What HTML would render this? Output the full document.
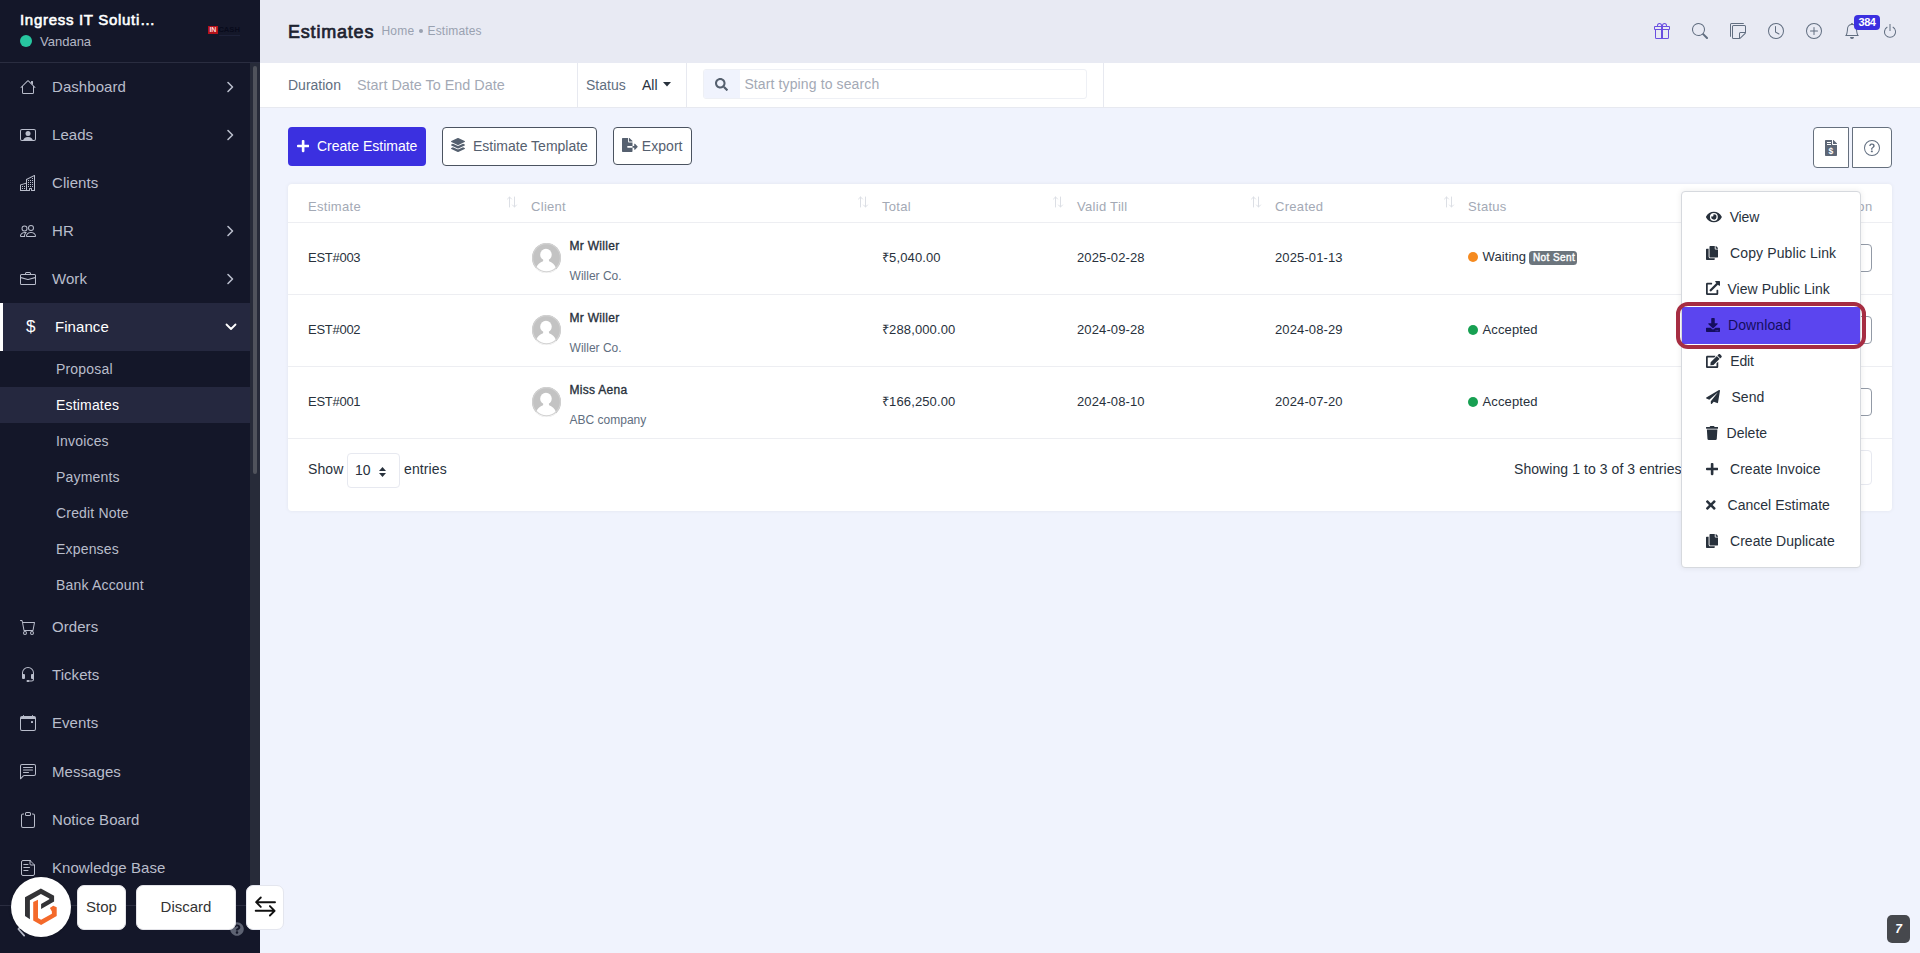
<!DOCTYPE html>
<html lang="en">
<head>
<meta charset="utf-8">
<title>Estimates</title>
<style>
*{box-sizing:border-box;margin:0;padding:0}
html,body{width:1920px;height:953px;overflow:hidden}
body{font-family:"Liberation Sans",sans-serif;font-size:14px;color:#28313c;background:#f0f3fd;position:relative}
.abs{position:absolute}
svg{display:block}
/* sidebar */
#sb{position:absolute;left:0;top:0;width:260px;height:953px;background:#141729;color:#b9bdcb}
#sbh{position:absolute;left:0;top:0;width:260px;height:63px;border-bottom:1px solid #2a2d40}
#sbh .co{position:absolute;left:20px;top:10px;font-size:15px;letter-spacing:0.7px;font-weight:normal;-webkit-text-stroke:0.6px #fff;color:#fff;line-height:20px;white-space:nowrap}
#sbh .us{position:absolute;left:40px;top:34px;font-size:13px;color:#b4b8c6;line-height:16px}
#sbh .dot{position:absolute;left:20px;top:34.500px;width:12px;height:12px;border-radius:50%;background:#27c6a0}
#sbtrack{position:absolute;left:250px;top:63px;width:10px;height:827px;background:#272b39}
#sbthumb{position:absolute;left:253px;top:66px;width:4px;height:408px;background:#50535c;border-radius:2px}
.mi{position:absolute;left:0;width:250px;height:48px;font-size:15px;line-height:48px;color:#b9bdcb}
.mi .t{position:absolute;left:52px;top:0;white-space:nowrap;letter-spacing:0.06px}
.mi .ic{position:absolute;left:20px;top:16px;width:16px;height:16px}
.mi .ch{position:absolute;left:225px;top:18px;width:10px;height:12px}
.mi.act{background:#25283f;color:#fff;border-left:3px solid #fff}
.mi.act .t{left:52px}
.smi{position:absolute;left:0;width:250px;height:36px;font-size:14px;line-height:36.600px;color:#b9bdcb;padding-left:56px;letter-spacing:0.18px}
.smi.act{background:#25283f;color:#fff}
/* topbar */
#tb{position:absolute;left:260px;top:0;width:1660px;height:63px;background:#e8eaf3}
#tb h1{position:absolute;left:28px;top:20px;font-size:18px;line-height:24px;font-weight:normal;-webkit-text-stroke:0.7px #1d2330;color:#1d2330;letter-spacing:0.8px}
#tb .bc{position:absolute;top:23px;font-size:12px;line-height:16px;color:#99a1b0;white-space:nowrap;letter-spacing:0.18px}
/* filter bar */
#fb{position:absolute;left:260px;top:63px;width:1660px;height:45px;background:#fff;border-bottom:1px solid #e7e9f0}
#fb .l{position:absolute;top:0;line-height:44px;font-size:14px;color:#616e80;white-space:nowrap}
#fb .ph{color:#a3a9b5}
#fb .dv{position:absolute;top:0;width:1px;height:44px;background:#e7e9f0}
#sr{position:absolute;left:443px;top:6px;width:384px;height:30px;border:1px solid #eef0f5;border-radius:3px;background:#fff}
#sr .si{position:absolute;left:0;top:0;width:36px;height:28px;background:#f0f3fd;border-radius:2px 0 0 2px}
#sr .pt{position:absolute;left:40.400px;top:0;line-height:29px;font-size:14px;color:#a3a9b5;letter-spacing:0.12px;white-space:nowrap}
/* buttons */
.btn{position:absolute;height:38px;border-radius:4px;font-size:14px;line-height:36px;white-space:nowrap}
.btn.p{background:#3b30e0;color:#fff;line-height:38px}
.btn.s{background:#fff;border:1px solid #4b5360;color:#55606f}
/* table */
#card{position:absolute;left:288px;top:184px;width:1604px;height:327px;background:#fff;border-radius:4px;box-shadow:0 0 4px rgba(0,0,0,.06)}
.th{position:absolute;top:15px;font-size:13px;line-height:16px;color:#a3a9b5;letter-spacing:0.3px;white-space:nowrap}
.srt{position:absolute;top:11px;width:12px;height:14px}
.hl{position:absolute;left:0;width:1604px;height:1px;background:#edeef2}
.td{position:absolute;font-size:13px;line-height:16px;color:#28313c;white-space:nowrap;letter-spacing:0.12px}
.nm{position:absolute;font-size:12px;line-height:16px;font-weight:normal;-webkit-text-stroke:0.35px #28313c;letter-spacing:0.28px;color:#28313c;white-space:nowrap}
.cp{position:absolute;font-size:12px;line-height:16px;color:#616e80;white-space:nowrap}
.av{position:absolute;width:29px;height:29.500px;border-radius:50%;background:#c3c3c3;overflow:hidden}
.sd{position:absolute;width:10px;height:10px;border-radius:50%}
.ab{position:absolute;left:1557px;width:27px;height:27.500px;border:1px solid #929aa6;border-radius:4px;background:#fff}
/* dropdown */
#dd{position:absolute;left:1681px;top:191px;width:180px;height:376.500px;background:#fff;border:1px solid #d6d9de;border-radius:4px;box-shadow:0 0 6px rgba(0,0,0,.08)}
.di{position:absolute;left:0;width:178px;height:36px;line-height:36px;font-size:14px;color:#28313c;white-space:nowrap;letter-spacing:0.03px}
.di svg{position:absolute;left:24px;top:11px}
.di span{position:absolute;top:0}
</style>
</head>
<body>
<!-- SIDEBAR -->
<div id="sb">
 <div id="sbh">
  <div class="co">Ingress IT Soluti…</div>
  <div class="dot"></div>
  <div class="us">Vandana</div>
  <div class="abs" style="left:208.200px;top:25.500px;width:9.400px;height:8.700px;background:#b4121a;color:#ffd9d9;font-size:7px;font-weight:bold;line-height:8.700px;text-align:center;letter-spacing:-0.2px">IN</div><div class="abs" style="left:218.400px;top:26.200px;font-size:7.600px;font-weight:bold;line-height:8px;color:#080a1b;white-space:nowrap">CASH</div><div class="abs" style="left:218.600px;top:35px;width:21px;height:1px;background:#1d2138"></div>
 </div>
 <div id="sbtrack"></div><div id="sbthumb"></div>
 <div id="menu">
  <div class="mi" style="top:63px"><svg width="16" height="16" viewBox="0 0 16 16" fill="currentColor" style="position:absolute;left:20px;top:16px"><path fill-rule="evenodd" d="M2 13.5V7h1v6.5a.5.5 0 0 0 .5.5h9a.5.5 0 0 0 .5-.5V7h1v6.5a1.5 1.5 0 0 1-1.5 1.5h-9A1.5 1.5 0 0 1 2 13.5zm11-11V6l-2-2V2.5a.5.5 0 0 1 .5-.5h1a.5.5 0 0 1 .5.5z"/><path fill-rule="evenodd" d="M7.293 1.5a1 1 0 0 1 1.414 0l6.647 6.646a.5.5 0 0 1-.708.708L8 2.207 1.354 8.854a.5.5 0 1 1-.708-.708L7.293 1.5z"/></svg><span class="t">Dashboard</span><svg class="ch" viewBox="0 0 10 12" fill="none" stroke="currentColor" stroke-width="1.6" stroke-linecap="round" stroke-linejoin="round"><path d="M3 1.5l4.5 4.500L3 10.500"/></svg></div>
  <div class="mi" style="top:111px"><svg width="16" height="16" viewBox="0 0 16 16" fill="currentColor" style="position:absolute;left:20px;top:16px"><path d="M8 9.05a2.5 2.5 0 1 0 0-5 2.5 2.5 0 0 0 0 5z"/><path d="M2 2a2 2 0 0 0-2 2v8a2 2 0 0 0 2 2h12a2 2 0 0 0 2-2V4a2 2 0 0 0-2-2H2zm10.798 11c-.453-1.27-1.76-3-4.798-3-3.037 0-4.345 1.73-4.798 3H2a1 1 0 0 1-1-1V4a1 1 0 0 1 1-1h12a1 1 0 0 1 1 1v8a1 1 0 0 1-1 1h-1.202z"/></svg><span class="t">Leads</span><svg class="ch" viewBox="0 0 10 12" fill="none" stroke="currentColor" stroke-width="1.6" stroke-linecap="round" stroke-linejoin="round"><path d="M3 1.5l4.5 4.500L3 10.500"/></svg></div>
  <div class="mi" style="top:159px"><svg width="16" height="16" viewBox="0 0 16 16" fill="currentColor" style="position:absolute;left:20px;top:16px"><path fill-rule="evenodd" d="M14.763.075A.5.5 0 0 1 15 .5v15a.5.5 0 0 1-.5.5h-3a.5.5 0 0 1-.5-.5V14h-1v1.5a.5.5 0 0 1-.5.5h-9a.5.5 0 0 1-.5-.5V10a.5.5 0 0 1 .342-.474L6 7.64V4.5a.5.5 0 0 1 .276-.447l8-4a.5.5 0 0 1 .487.022zM6 8.694 1 10.36V15h5V8.694zM7 15h2v-1.5a.5.5 0 0 1 .5-.5h2a.5.5 0 0 1 .5.5V15h2V1.309l-7 3.5V15z"/><path d="M2 11h1v1H2v-1zm2 0h1v1H4v-1zm-2 2h1v1H2v-1zm2 0h1v1H4v-1zm4-4h1v1H8V9zm2 0h1v1h-1V9zm-2 2h1v1H8v-1zm2 0h1v1h-1v-1zm2-2h1v1h-1V9zm0 2h1v1h-1v-1zM8 7h1v1H8V7zm2 0h1v1h-1V7zm2 0h1v1h-1V7zM8 5h1v1H8V5zm2 0h1v1h-1V5zm2 0h1v1h-1V5zm0-2h1v1h-1V3z"/></svg><span class="t">Clients</span></div>
  <div class="mi" style="top:207px"><svg width="16" height="16" viewBox="0 0 16 16" fill="currentColor" style="position:absolute;left:20px;top:16px"><path d="M15 14s1 0 1-1-1-4-5-4-5 3-5 4 1 1 1 1h8zm-7.978-1A.261.261 0 0 1 7 12.996c.001-.264.167-1.03.76-1.72C8.312 10.629 9.282 10 11 10c1.717 0 2.687.63 3.24 1.276.593.69.758 1.457.76 1.72l-.008.002a.274.274 0 0 1-.014.002H7.022zM11 7a2 2 0 1 0 0-4 2 2 0 0 0 0 4zm3-2a3 3 0 1 1-6 0 3 3 0 0 1 6 0zM6.936 9.28a5.88 5.88 0 0 0-1.23-.247A7.35 7.35 0 0 0 5 9c-4 0-5 3-5 4 0 .667.333 1 1 1h4.216A2.238 2.238 0 0 1 5 13c0-1.01.377-2.042 1.09-2.904.243-.294.526-.569.846-.816zM4.92 10A5.493 5.493 0 0 0 4 13H1c0-.26.164-1.03.76-1.724.545-.636 1.492-1.256 3.16-1.275zM1.5 5.5a3 3 0 1 1 6 0 3 3 0 0 1-6 0zm3-2a2 2 0 1 0 0 4 2 2 0 0 0 0-4z"/></svg><span class="t">HR</span><svg class="ch" viewBox="0 0 10 12" fill="none" stroke="currentColor" stroke-width="1.6" stroke-linecap="round" stroke-linejoin="round"><path d="M3 1.5l4.5 4.500L3 10.500"/></svg></div>
  <div class="mi" style="top:255px"><svg width="16" height="16" viewBox="0 0 16 16" fill="currentColor" style="position:absolute;left:20px;top:16px"><path d="M6.5 1A1.5 1.5 0 0 0 5 2.5V3H1.5A1.5 1.5 0 0 0 0 4.5v8A1.5 1.5 0 0 0 1.5 14h13a1.5 1.5 0 0 0 1.5-1.5v-8A1.5 1.5 0 0 0 14.5 3H11v-.5A1.5 1.5 0 0 0 9.5 1h-3zm0 1h3a.5.5 0 0 1 .5.5V3H6v-.5a.5.5 0 0 1 .5-.5zm1.886 6.914L15 7.151V12.5a.5.5 0 0 1-.5.5h-13a.5.5 0 0 1-.5-.5V7.15l6.614 1.764a1.5 1.5 0 0 0 .772 0zM1.5 4h13a.5.5 0 0 1 .5.5v1.616L8.129 7.948a.5.5 0 0 1-.258 0L1 6.116V4.5a.5.5 0 0 1 .5-.5z"/></svg><span class="t">Work</span><svg class="ch" viewBox="0 0 10 12" fill="none" stroke="currentColor" stroke-width="1.6" stroke-linecap="round" stroke-linejoin="round"><path d="M3 1.5l4.5 4.500L3 10.500"/></svg></div>
  <div class="mi act" style="top:303px"><span class="abs" style="left:23px;top:0;font-size:17px">$</span><span class="t">Finance</span><svg class="ch" style="left:221.500px;top:19px;width:12px;height:10px" viewBox="0 0 12 10" fill="none" stroke="currentColor" stroke-width="1.8" stroke-linecap="round" stroke-linejoin="round"><path d="M1.500 2.500L6 7l4.500-4.500"/></svg></div>
  <div class="smi" style="top:351px">Proposal</div>
  <div class="smi act" style="top:387px">Estimates</div>
  <div class="smi" style="top:423px">Invoices</div>
  <div class="smi" style="top:459px">Payments</div>
  <div class="smi" style="top:495px">Credit Note</div>
  <div class="smi" style="top:531px">Expenses</div>
  <div class="smi" style="top:567px">Bank Account</div>
  <div class="mi" style="top:603px"><svg width="16" height="16" viewBox="0 0 16 16" fill="currentColor" style="position:absolute;left:20px;top:16px"><path d="M0 1.5A.5.5 0 0 1 .5 1H2a.5.5 0 0 1 .485.379L2.89 3H14.5a.5.5 0 0 1 .491.592l-1.5 8A.5.5 0 0 1 13 12H4a.5.5 0 0 1-.491-.408L2.01 3.607 1.61 2H.5a.5.5 0 0 1-.5-.5zM3.102 4l1.313 7h8.17l1.313-7H3.102zM5 12a2 2 0 1 0 0 4 2 2 0 0 0 0-4zm7 0a2 2 0 1 0 0 4 2 2 0 0 0 0-4zm-7 1a1 1 0 1 1 0 2 1 1 0 0 1 0-2zm7 0a1 1 0 1 1 0 2 1 1 0 0 1 0-2z"/></svg><span class="t">Orders</span></div>
  <div class="mi" style="top:651px"><svg width="16" height="16" viewBox="0 0 16 16" fill="currentColor" style="position:absolute;left:20px;top:16px"><path d="M8 1a5 5 0 0 0-5 5v1h1a1 1 0 0 1 1 1v3a1 1 0 0 1-1 1H3a1 1 0 0 1-1-1V6a6 6 0 1 1 12 0v6a2.5 2.5 0 0 1-2.5 2.5H9.366a1 1 0 0 1-.866.5h-1a1 1 0 1 1 0-2h1a1 1 0 0 1 .866.5H11.5A1.5 1.5 0 0 0 13 12h-1a1 1 0 0 1-1-1V8a1 1 0 0 1 1-1h1V6a5 5 0 0 0-5-5z"/></svg><span class="t">Tickets</span></div>
  <div class="mi" style="top:699px"><svg width="16" height="16" viewBox="0 0 16 16" fill="currentColor" style="position:absolute;left:20px;top:16px"><path d="M11 6.5a.5.5 0 0 1 .5-.5h1a.5.5 0 0 1 .5.5v1a.5.5 0 0 1-.5.5h-1a.5.5 0 0 1-.5-.5v-1z"/><path d="M3.5 0a.5.5 0 0 1 .5.5V1h8V.5a.5.5 0 0 1 1 0V1h1a2 2 0 0 1 2 2v11a2 2 0 0 1-2 2H2a2 2 0 0 1-2-2V3a2 2 0 0 1 2-2h1V.5a.5.5 0 0 1 .5-.5zM1 4v10a1 1 0 0 0 1 1h12a1 1 0 0 0 1-1V4H1z"/></svg><span class="t">Events</span></div>
  <div class="mi" style="top:748px"><svg width="16" height="16" viewBox="0 0 16 16" fill="currentColor" style="position:absolute;left:20px;top:16px"><path d="M14 1a1 1 0 0 1 1 1v8a1 1 0 0 1-1 1H4.414A2 2 0 0 0 3 11.586l-2 2V2a1 1 0 0 1 1-1h12zM2 0a2 2 0 0 0-2 2v12.793a.5.5 0 0 0 .854.353l2.853-2.853A1 1 0 0 1 4.414 12H14a2 2 0 0 0 2-2V2a2 2 0 0 0-2-2H2z"/><path d="M3 3.5a.5.5 0 0 1 .5-.5h9a.5.5 0 0 1 0 1h-9a.5.5 0 0 1-.5-.5zM3 6a.5.5 0 0 1 .5-.5h9a.5.5 0 0 1 0 1h-9A.5.5 0 0 1 3 6zm0 2.5a.5.5 0 0 1 .5-.5h5a.5.5 0 0 1 0 1h-5a.5.5 0 0 1-.5-.5z"/></svg><span class="t">Messages</span></div>
  <div class="mi" style="top:796px"><svg width="16" height="16" viewBox="0 0 16 16" fill="currentColor" style="position:absolute;left:20px;top:16px"><path d="M4 1.5H3a2 2 0 0 0-2 2V14a2 2 0 0 0 2 2h10a2 2 0 0 0 2-2V3.5a2 2 0 0 0-2-2h-1v1h1a1 1 0 0 1 1 1V14a1 1 0 0 1-1 1H3a1 1 0 0 1-1-1V3.5a1 1 0 0 1 1-1h1v-1z"/><path d="M9.5 1a.5.5 0 0 1 .5.5v1a.5.5 0 0 1-.5.5h-3a.5.5 0 0 1-.5-.5v-1a.5.5 0 0 1 .5-.5h3zm-3-1A1.5 1.5 0 0 0 5 1.5v1A1.5 1.5 0 0 0 6.500 4h3A1.5 1.5 0 0 0 11 2.500v-1A1.5 1.5 0 0 0 9.500 0h-3z"/></svg><span class="t">Notice Board</span></div>
  <div class="mi" style="top:844px"><svg width="16" height="16" viewBox="0 0 16 16" fill="currentColor" style="position:absolute;left:20px;top:16px"><g fill="none" stroke="currentColor" stroke-width="1" stroke-linecap="round" stroke-linejoin="round"><path d="M10 .5H3A1.500 1.500 0 0 0 1.500 2v12A1.500 1.500 0 0 0 3 15.500h10a1.500 1.500 0 0 0 1.500-1.500V5L10 .5z"/><path d="M10 .5V4a1 1 0 0 0 1 1h3.500M3.800 4.500H8M3.800 7.500h5.700M3.800 10.500H8"/></g></svg><span class="t">Knowledge Base</span></div>
 </div>
</div>

<!-- TOPBAR -->
<div id="tb">
 <h1>Estimates</h1>
 <div class="bc" style="left:121.5px">Home</div><div class="abs" style="left:158.5px;top:28.500px;width:4.500px;height:4.500px;border-radius:50%;background:#99a1b0"></div><div class="bc" style="left:167.500px">Estimates</div>
 <div id="tbi">
  <svg width="16" height="16" viewBox="0 0 16 16" fill="#6a4fe0" style="position:absolute;left:1394px;top:23px"><path d="M3 2.5a2.5 2.5 0 0 1 5 0 2.5 2.5 0 0 1 5 0v.006c0 .07 0 .27-.038.494H15a1 1 0 0 1 1 1v2a1 1 0 0 1-1 1v7.5a1.5 1.5 0 0 1-1.5 1.5h-11A1.5 1.5 0 0 1 1 14.5V7a1 1 0 0 1-1-1V4a1 1 0 0 1 1-1h2.038A2.968 2.968 0 0 1 3 2.506V2.500zm1.068.5H7v-.5a1.5 1.5 0 1 0-3 0c0 .085.002.274.045.43a.522.522 0 0 0 .023.07zM9 3h2.932a.56.56 0 0 0 .023-.07c.043-.156.045-.345.045-.43a1.5 1.5 0 0 0-3 0V3zM1 4v2h6V4H1zm8 0v2h6V4H9zm5 3H9v8h4.500a.5.5 0 0 0 .5-.5V7zm-7 8V7H2v7.500a.5.5 0 0 0 .5.5H7z"/></svg>
  <svg width="16" height="16" viewBox="0 0 16 16" fill="#616e80" style="position:absolute;left:1432px;top:23px"><path d="M11.742 10.344a6.5 6.5 0 1 0-1.397 1.398h-.001c.03.04.062.078.098.115l3.850 3.850a1 1 0 0 0 1.415-1.414l-3.850-3.850a1.007 1.007 0 0 0-.115-.1zM12 6.500a5.500 5.500 0 1 1-11 0 5.500 5.500 0 0 1 11 0z"/></svg>
  <svg width="16" height="16" viewBox="0 0 16 16" fill="#616e80" style="position:absolute;left:1470px;top:23px"><path d="M1.5 0A1.5 1.5 0 0 0 0 1.500V13a1 1 0 0 0 1 1V1.500a.5.5 0 0 1 .5-.5H14a1 1 0 0 0-1-1H1.500z"/><path d="M3.500 2A1.500 1.500 0 0 0 2 3.500v11A1.500 1.500 0 0 0 3.500 16h6.086a1.500 1.500 0 0 0 1.060-.44l4.915-4.914A1.500 1.500 0 0 0 16 9.586V3.500A1.500 1.500 0 0 0 14.500 2h-11zM3 3.500a.5.5 0 0 1 .5-.5h11a.5.5 0 0 1 .5.5V9h-4.500A1.500 1.500 0 0 0 9 10.500V15H3.500a.5.5 0 0 1-.5-.5v-11zm7 11.293V10.500a.5.5 0 0 1 .5-.5h4.293L10 14.793z"/></svg>
  <svg width="16" height="16" viewBox="0 0 16 16" fill="#616e80" style="position:absolute;left:1508px;top:23px"><path d="M8 3.500a.5.5 0 0 0-1 0V9a.5.5 0 0 0 .252.434l3.500 2a.5.5 0 0 0 .496-.868L8 8.710V3.500z"/><path d="M8 16A8 8 0 1 0 8 0a8 8 0 0 0 0 16zm7-8A7 7 0 1 1 1 8a7 7 0 0 1 14 0z"/></svg>
  <svg width="16" height="16" viewBox="0 0 16 16" fill="#616e80" style="position:absolute;left:1546px;top:23px"><path d="M8 15A7 7 0 1 1 8 1a7 7 0 0 1 0 14zm0 1A8 8 0 1 0 8 0a8 8 0 0 0 0 16z"/><path d="M8 4a.5.5 0 0 1 .5.5v3h3a.5.5 0 0 1 0 1h-3v3a.5.5 0 0 1-1 0v-3h-3a.5.5 0 0 1 0-1h3v-3A.5.5 0 0 1 8 4z"/></svg>
  <svg width="16" height="16" viewBox="0 0 16 16" fill="#616e80" style="position:absolute;left:1584px;top:23px"><path d="M8 16a2 2 0 0 0 2-2H6a2 2 0 0 0 2 2zM8 1.918l-.797.161A4.002 4.002 0 0 0 4 6c0 .628-.134 2.197-.459 3.742-.16.767-.376 1.566-.663 2.258h10.244c-.287-.692-.502-1.490-.663-2.258C12.134 8.197 12 6.628 12 6a4.002 4.002 0 0 0-3.203-3.920L8 1.917zM14.220 12c.223.447.481.801.780 1H1c.299-.199.557-.553.780-1C2.680 10.200 3 6.880 3 6c0-2.420 1.720-4.440 4.005-4.901a1 1 0 1 1 1.990 0A5.002 5.002 0 0 1 13 6c0 .880.320 4.200 1.220 6z"/></svg>
  <svg width="16" height="16" viewBox="0 0 16 16" fill="#616e80" style="position:absolute;left:1622px;top:23px"><path d="M7.500 1v7h1V1h-1z"/><path d="M3 8.812a4.999 4.999 0 0 1 2.578-4.375l-.485-.874A6 6 0 1 0 11 3.616l-.501.865A5 5 0 1 1 3 8.812z"/></svg>
  <div class="abs" style="left:1594px;top:15px;width:26px;height:15px;border-radius:4px;background:#3b30e0;color:#fff;font-size:11px;font-weight:bold;line-height:15px;text-align:center;letter-spacing:-0.5px">384</div>
 </div>
</div>

<!-- FILTER BAR -->
<div id="fb">
 <div class="l" style="left:28px">Duration</div>
 <div class="l ph" style="left:97px;font-size:14.4px">Start Date To End Date</div>
 <div class="dv" style="left:317px"></div>
 <div class="l" style="left:326px">Status</div>
 <div class="l" style="left:382px;color:#28313c">All</div>
 <svg class="abs" style="left:402.500px;top:19px" width="8" height="5" viewBox="0 0 8 5"><path d="M0 0h8L4 4.600z" fill="#28313c"/></svg>
 <div class="dv" style="left:426px"></div>
 <div id="sr"><div class="si"><svg width="13.0" height="13" viewBox="0 0 512 512" fill="#55606f" style="position:absolute;left:11px;top:8px"><path d="M505 442.7L405.3 343c-4.5-4.5-10.6-7-17-7H372c27.6-35.3 44-79.7 44-128C416 93.1 322.9 0 208 0S0 93.1 0 208s93.1 208 208 208c48.3 0 92.7-16.400 128-44v16.300c0 6.400 2.500 12.500 7 17l99.700 99.700c9.400 9.400 24.600 9.400 33.900 0l28.300-28.300c9.400-9.400 9.400-24.600.1-34zM208 336c-70.700 0-128-57.200-128-128 0-70.700 57.200-128 128-128 70.700 0 128 57.200 128 128 0 70.700-57.200 128-128 128z"/></svg></div><div class="pt">Start typing to search</div></div>
 <div class="dv" style="left:843px"></div>
</div>

<!-- ACTION BUTTONS -->
<div class="btn p" style="left:288px;top:127px;width:138px;height:38.500px;line-height:39px"><svg width="12.25" height="14" viewBox="0 0 448 512" fill="#fff" style="position:absolute;left:9px;top:11.600px"><path d="M416 208H272V64c0-17.67-14.33-32-32-32h-32c-17.67 0-32 14.33-32 32v144H32c-17.67 0-32 14.33-32 32v32c0 17.67 14.33 32 32 32h144v144c0 17.67 14.33 32 32 32h32c17.67 0 32-14.33 32-32V304h144c17.67 0 32-14.33 32-32v-32c0-17.67-14.33-32-32-32z"/></svg><span class="abs" style="left:29px">Create Estimate</span></div>
<div class="btn s" style="left:442px;top:127px;width:155px;height:38.500px;line-height:37px"><svg width="14.0" height="14" viewBox="0 0 512 512" fill="#55606f" style="position:absolute;left:8px;top:10.200px"><path d="M12.410 148.020l232.940 105.670c6.800 3.090 14.490 3.090 21.290 0l232.940-105.670c16.550-7.510 16.550-32.520 0-40.030L266.650 2.310a25.607 25.607 0 0 0-21.290 0L12.410 107.980c-16.550 7.510-16.550 32.530 0 40.040zm487.180 88.280l-58.090-26.330-161.640 73.270c-7.560 3.430-15.590 5.170-23.860 5.170s-16.290-1.740-23.860-5.170L70.510 209.970l-58.100 26.330c-16.550 7.500-16.550 32.500 0 40l232.940 105.590c6.800 3.080 14.490 3.080 21.290 0L499.590 276.300c16.550-7.500 16.550-32.500 0-40zm0 127.800l-57.870-26.230-161.860 73.370c-7.560 3.430-15.590 5.170-23.860 5.170s-16.290-1.740-23.860-5.170L70.290 337.870 12.410 364.100c-16.550 7.500-16.550 32.500 0 40l232.940 105.590c6.800 3.080 14.490 3.080 21.290 0L499.590 404.100c16.550-7.500 16.550-32.500 0-40z"/></svg><span class="abs" style="left:30px">Estimate Template</span></div>
<div class="btn s" style="left:613px;top:127px;width:79px;height:38px;line-height:36px"><svg width="15.75" height="14" viewBox="0 0 576 512" fill="#55606f" style="position:absolute;left:8px;top:10px"><path d="M384 121.900c0-6.300-2.500-12.400-7-16.900L279.100 7c-4.500-4.500-10.600-7-17-7H256v128h128zM571 308l-95.700-96.400c-10.100-10.100-27.400-3-27.400 11.300V288h-64v64h64v65.200c0 14.300 17.300 21.400 27.400 11.300L571 332c6.600-6.600 6.600-17.400 0-24zm-379 28v-32c0-8.800 7.200-16 16-16h176V160H248c-13.200 0-24-10.800-24-24V0H24C10.700 0 0 10.700 0 24v464c0 13.300 10.700 24 24 24h336c13.300 0 24-10.700 24-24V352H208c-8.800 0-16-7.200-16-16z"/></svg><span class="abs" style="left:27.800px;letter-spacing:0.05px">Export</span></div>
<div class="btn s" style="left:1813px;top:127px;width:36px;height:41px;border-radius:4px 0 0 4px;border-color:#66707e"><svg width="12.0" height="16" viewBox="0 0 384 512" fill="#5d6675" style="position:absolute;left:11px;top:12px"><path d="M377 105L279.100 7c-4.500-4.500-10.600-7-17-7H256v128h128v-6.100c0-6.300-2.500-12.400-7-16.900zm-153 31V0H24C10.700 0 0 10.700 0 24v464c0 13.300 10.700 24 24 24h336c13.300 0 24-10.700 24-24V160H248c-13.200 0-24-10.800-24-24z"/></svg><span class="abs" style="left:12.500px;top:13.900px;width:4px;height:1px;background:#fff"></span><span class="abs" style="left:12.500px;top:15.900px;width:4px;height:1px;background:#fff"></span><span class="abs" style="left:14.400px;top:17.500px;font-size:8.500px;line-height:10px;font-weight:bold;color:#fff">$</span></div>
<div class="btn s" style="left:1852px;top:127px;width:40px;height:41px;border-radius:0 4px 4px 0;border-color:#66707e"><svg width="16" height="16" viewBox="0 0 16 16" fill="#616e80" style="position:absolute;left:11px;top:12px"><path d="M8 15A7 7 0 1 1 8 1a7 7 0 0 1 0 14zm0 1A8 8 0 1 0 8 0a8 8 0 0 0 0 16z"/><path d="M5.255 5.786a.237.237 0 0 0 .241.247h.825c.138 0 .248-.113.266-.250.090-.656.540-1.134 1.342-1.134.686 0 1.314.343 1.314 1.168 0 .635-.374.927-.965 1.371-.673.489-1.206 1.060-1.168 1.987l.003.217a.250.250 0 0 0 .250.246h.811a.250.250 0 0 0 .250-.250v-.105c0-.718.273-.927 1.010-1.486.609-.463 1.244-.977 1.244-2.056 0-1.511-1.276-2.241-2.673-2.241-1.267 0-2.655.590-2.750 2.286zm1.557 5.763c0 .533.425.927 1.010.927.609 0 1.028-.394 1.028-.927 0-.552-.420-.940-1.029-.940-.584 0-1.009.388-1.009.940z"/></svg></div>

<!-- TABLE CARD -->
<div id="card">
 <div class="th" style="left:20px">Estimate</div>
 <div class="th" style="left:243px">Client</div>
 <div class="th" style="left:594px">Total</div>
 <div class="th" style="left:789px">Valid Till</div>
 <div class="th" style="left:987px">Created</div>
 <div class="th" style="left:1180px">Status</div>
 <div class="th" style="left:1546.5px">Action</div>
 <svg class="srt" style="left:218px" viewBox="0 0 12 14" fill="none" stroke="#dcdfe5" stroke-width="1" stroke-linecap="round" stroke-linejoin="round"><path d="M3.500 12V2M1.500 4l2-2 2 2M8.500 2v10M6.500 10l2 2 2-2"/></svg>
 <svg class="srt" style="left:569px" viewBox="0 0 12 14" fill="none" stroke="#dcdfe5" stroke-width="1" stroke-linecap="round" stroke-linejoin="round"><path d="M3.500 12V2M1.500 4l2-2 2 2M8.500 2v10M6.500 10l2 2 2-2"/></svg>
 <svg class="srt" style="left:764px" viewBox="0 0 12 14" fill="none" stroke="#dcdfe5" stroke-width="1" stroke-linecap="round" stroke-linejoin="round"><path d="M3.500 12V2M1.500 4l2-2 2 2M8.500 2v10M6.500 10l2 2 2-2"/></svg>
 <svg class="srt" style="left:962px" viewBox="0 0 12 14" fill="none" stroke="#dcdfe5" stroke-width="1" stroke-linecap="round" stroke-linejoin="round"><path d="M3.500 12V2M1.500 4l2-2 2 2M8.500 2v10M6.500 10l2 2 2-2"/></svg>
 <svg class="srt" style="left:1155px" viewBox="0 0 12 14" fill="none" stroke="#dcdfe5" stroke-width="1" stroke-linecap="round" stroke-linejoin="round"><path d="M3.500 12V2M1.500 4l2-2 2 2M8.500 2v10M6.500 10l2 2 2-2"/></svg>
 <div class="hl" style="top:38px"></div>
 <div class="td" style="left:20px;top:66px;letter-spacing:-0.27px">EST#003</div>
 <div class="av" style="left:243.600px;top:59.3px"><svg width="29" height="29.500" viewBox="0 0 29.500 29.500" preserveAspectRatio="none" style="position:absolute;left:0;top:0"><circle cx="14.200" cy="11.700" r="5.900" fill="#fff"/><path d="M4.300 25.500C5 21.200 8.500 19.300 11.200 18.200l.5-2.500h5.200l.5 2.500c2.700 1.100 6.200 3 6.900 7.300V30H4.300z" fill="#fff"/><circle cx="14.750" cy="14.750" r="14.100" fill="none" stroke="#d2d2d2" stroke-width="1.100"/></svg></div>
 <div class="nm" style="left:281.600px;top:54px">Mr Willer</div>
 <div class="cp" style="left:281.600px;top:84px">Willer Co.</div>
 <div class="td" style="left:594px;top:66px">₹5,040.00</div>
 <div class="td" style="left:789px;top:66px">2025-02-28</div>
 <div class="td" style="left:987px;top:66px">2025-01-13</div>
 <div class="sd" style="left:1180px;top:68px;background:#f58a1f"></div>
 <div class="td" style="left:1194.500px;top:65px">Waiting</div>
 <div class="abs" style="left:1241px;top:67.3px;width:48px;height:13.500px;padding-left:4px;border-radius:3.500px;background:#6c757d;color:#fff;font-size:10px;letter-spacing:0.4px;-webkit-text-stroke:0.4px #fff;line-height:13.500px;white-space:nowrap">Not Sent</div>
 <div class="ab" style="top:60.2px"><span class="abs" style="left:11px;top:6px;width:3px;height:3px;border-radius:50%;background:#616e80;box-shadow:0 5px 0 #616e80,0 10px 0 #616e80"></span></div>
 <div class="hl" style="top:110px"></div>
 <div class="td" style="left:20px;top:138px;letter-spacing:-0.27px">EST#002</div>
 <div class="av" style="left:243.600px;top:131.3px"><svg width="29" height="29.500" viewBox="0 0 29.500 29.500" preserveAspectRatio="none" style="position:absolute;left:0;top:0"><circle cx="14.200" cy="11.700" r="5.900" fill="#fff"/><path d="M4.300 25.500C5 21.200 8.500 19.300 11.200 18.200l.5-2.500h5.200l.5 2.500c2.700 1.100 6.200 3 6.900 7.300V30H4.300z" fill="#fff"/><circle cx="14.750" cy="14.750" r="14.100" fill="none" stroke="#d2d2d2" stroke-width="1.100"/></svg></div>
 <div class="nm" style="left:281.600px;top:126px">Mr Willer</div>
 <div class="cp" style="left:281.600px;top:156px">Willer Co.</div>
 <div class="td" style="left:594px;top:138px">₹288,000.00</div>
 <div class="td" style="left:789px;top:138px">2024-09-28</div>
 <div class="td" style="left:987px;top:138px">2024-08-29</div>
 <div class="sd" style="left:1180px;top:140.8px;background:#17a052"></div>
 <div class="td" style="left:1194.500px;top:137.8px">Accepted</div>
 <div class="ab" style="top:132.2px"><span class="abs" style="left:11px;top:6px;width:3px;height:3px;border-radius:50%;background:#616e80;box-shadow:0 5px 0 #616e80,0 10px 0 #616e80"></span></div>
 <div class="hl" style="top:182px"></div>
 <div class="td" style="left:20px;top:210px;letter-spacing:-0.27px">EST#001</div>
 <div class="av" style="left:243.600px;top:203.3px"><svg width="29" height="29.500" viewBox="0 0 29.500 29.500" preserveAspectRatio="none" style="position:absolute;left:0;top:0"><circle cx="14.200" cy="11.700" r="5.900" fill="#fff"/><path d="M4.300 25.500C5 21.200 8.500 19.300 11.200 18.200l.5-2.500h5.200l.5 2.500c2.700 1.100 6.200 3 6.900 7.300V30H4.300z" fill="#fff"/><circle cx="14.750" cy="14.750" r="14.100" fill="none" stroke="#d2d2d2" stroke-width="1.100"/></svg></div>
 <div class="nm" style="left:281.600px;top:198px">Miss Aena</div>
 <div class="cp" style="left:281.600px;top:228px">ABC company</div>
 <div class="td" style="left:594px;top:210px">₹166,250.00</div>
 <div class="td" style="left:789px;top:210px">2024-08-10</div>
 <div class="td" style="left:987px;top:210px">2024-07-20</div>
 <div class="sd" style="left:1180px;top:212.8px;background:#17a052"></div>
 <div class="td" style="left:1194.500px;top:209.8px">Accepted</div>
 <div class="ab" style="top:204.2px"><span class="abs" style="left:11px;top:6px;width:3px;height:3px;border-radius:50%;background:#616e80;box-shadow:0 5px 0 #616e80,0 10px 0 #616e80"></span></div>
 <div class="hl" style="top:254px"></div>
 <div class="td" style="left:20px;top:277px;font-size:14px;color:#28313c">Show</div>
 <div class="abs" style="left:59px;top:269px;width:53px;height:35px;border:1px solid #e7e9f0;border-radius:4px;background:#fff"><span class="abs" style="left:7px;top:8px;font-size:14px;line-height:16px;color:#28313c">10</span><svg class="abs" style="left:30px;top:12px" width="9" height="12" viewBox="0 0 9 12" fill="#28313c"><path d="M4.500 1L8 5H1zM4.500 11L1 7h7z"/></svg></div>
 <div class="td" style="left:116px;top:277px;font-size:14px;color:#28313c">entries</div>
 <div class="td" style="left:1226px;top:277px;font-size:14px;letter-spacing:0.07px;color:#28313c">Showing 1 to 3 of 3 entries</div>
 <div class="abs" style="left:1500px;top:266.400px;width:84px;height:34.500px;border:1px solid #e7e9f0;border-radius:4px"></div>
</div>

<!-- DROPDOWN -->
<div id="dd">
 <div class="di" style="top:7px;letter-spacing:-0.15px"><svg width="15.75" height="14" viewBox="0 0 576 512" fill="#28313c" style="left:24px"><path d="M572.52 241.4C518.29 135.59 410.93 64 288 64S57.680 135.640 3.480 241.410a32.350 32.350 0 0 0 0 29.190C57.710 376.410 165.070 448 288 448s230.320-71.640 284.520-177.410a32.350 32.350 0 0 0 0-29.190zM288 400a144 144 0 1 1 144-144 143.930 143.930 0 0 1-144 144zm0-240a95.310 95.310 0 0 0-25.310 3.790 47.850 47.850 0 0 1-66.900 66.900A95.780 95.780 0 1 0 288 160z"/></svg><span style="left:47.7px">View</span></div>
 <div class="di" style="top:43px;letter-spacing:0.12px"><svg width="12.25" height="14" viewBox="0 0 448 512" fill="#28313c" style="left:24px"><path d="M320 448v40c0 13.255-10.745 24-24 24H24c-13.255 0-24-10.745-24-24V120c0-13.255 10.745-24 24-24h72v296c0 30.879 25.121 56 56 56h168zm0-344V0H152c-13.255 0-24 10.745-24 24v368c0 13.255 10.745 24 24 24h272c13.255 0 24-10.745 24-24V128H344c-13.200 0-24-10.800-24-24zm120.971-31.029L375.029 7.029A24 24 0 0 0 358.059 0H352v96h96v-6.059a24 24 0 0 0-7.029-16.970z"/></svg><span style="left:48px">Copy Public Link</span></div>
 <div class="di" style="top:79px;letter-spacing:0.04px"><svg width="14.0" height="14" viewBox="0 0 512 512" fill="#28313c" style="left:24px;top:10px"><path d="M432 320H400a16 16 0 0 0-16 16V448H64V128H208a16 16 0 0 0 16-16V80a16 16 0 0 0-16-16H48A48 48 0 0 0 0 112V464a48 48 0 0 0 48 48H400a48 48 0 0 0 48-48V336A16 16 0 0 0 432 320ZM488 0h-128c-21.370 0-32.050 25.910-17 41l35.730 35.730L135 320.370a24 24 0 0 0 0 34L157.670 377a24 24 0 0 0 34 0L435.280 133.320 471 169c15 15 41 4.500 41-17V24A24 24 0 0 0 488 0Z"/></svg><span style="left:45.5px">View Public Link</span></div>
 <div class="di" style="top:115px;background:#5b45ef;color:#140d5e;height:37px;top:115px;line-height:36.400px;letter-spacing:0.1px"><svg width="14.0" height="14" viewBox="0 0 512 512" fill="#140d5e" style="left:24px"><path d="M216 0h80c13.300 0 24 10.700 24 24v168h87.700c17.800 0 26.700 21.500 14.100 34.100L269.700 378.300c-7.500 7.500-19.800 7.500-27.300 0L90.100 226.100c-12.600-12.600-3.700-34.100 14.100-34.100H192V24c0-13.300 10.700-24 24-24zm296 376v112c0 13.300-10.700 24-24 24H24c-13.300 0-24-10.700-24-24V376c0-13.300 10.700-24 24-24h146.700l49 49c20.100 20.100 52.500 20.100 72.600 0l49-49H488c13.300 0 24 10.700 24 24zm-124 88c0-11-9-20-20-20s-20 9-20 20 9 20 20 20 20-9 20-20zm64 0c0-11-9-20-20-20s-20 9-20 20 9 20 20 20 20-9 20-20z"/></svg><span style="left:46px">Download</span></div>
 <div class="di" style="top:150.5px;letter-spacing:-0.1px"><svg width="15.75" height="14" viewBox="0 0 576 512" fill="#28313c" style="left:24px"><path d="M402.600 83.200l90.200 90.200c3.800 3.800 3.800 10 0 13.800L274.400 405.600l-92.800 10.300c-12.400 1.400-22.900-9.100-21.500-21.500l10.300-92.800L388.800 83.200c3.800-3.800 10-3.800 13.800 0zm162-22.900l-48.800-48.800c-15.200-15.200-39.900-15.200-55.200 0l-35.400 35.400c-3.800 3.800-3.800 10 0 13.800l90.200 90.200c3.800 3.800 10 3.800 13.800 0l35.400-35.400c15.200-15.300 15.200-40 0-55.200zM384 346.200V448H64V128h229.800c3.200 0 6.200-1.300 8.500-3.500l40-40c7.600-7.600 2.200-20.500-8.500-20.500H48C21.500 64 0 85.500 0 112v352c0 26.500 21.500 48 48 48h352c26.500 0 48-21.500 48-48V306.200c0-10.700-12.900-16-20.500-8.500l-40 40c-2.200 2.300-3.500 5.300-3.500 8.500z"/></svg><span style="left:48.2px">Edit</span></div>
 <div class="di" style="top:186.5px"><svg width="14.0" height="14" viewBox="0 0 512 512" fill="#28313c" style="left:24px"><path d="M476 3.200L12.500 270.600c-18.100 10.400-15.800 35.600 2.200 43.200L121 358.400l287.300-253.200c5.500-4.900 13.300 2.600 8.600 8.300L176 407v80.500c0 23.600 28.500 32.900 42.500 15.800L282 426l124.600 52.200c14.200 6 30.400-2.900 33-18.200l72-432C515 7.800 493.300-6.800 476 3.200z"/></svg><span style="left:49.5px">Send</span></div>
 <div class="di" style="top:222.5px"><svg width="12.25" height="14" viewBox="0 0 448 512" fill="#28313c" style="left:24px"><path d="M432 32H312l-9.400-18.700A24 24 0 0 0 281.100 0H166.800a23.720 23.720 0 0 0-21.400 13.300L136 32H16A16 16 0 0 0 0 48v32a16 16 0 0 0 16 16h416a16 16 0 0 0 16-16V48a16 16 0 0 0-16-16zM53.200 467a48 48 0 0 0 47.900 45h245.800a48 48 0 0 0 47.900-45L416 128H32z"/></svg><span style="left:44.5px">Delete</span></div>
 <div class="di" style="top:258.5px"><svg width="12.25" height="14" viewBox="0 0 448 512" fill="#28313c" style="left:24px"><path d="M416 208H272V64c0-17.67-14.33-32-32-32h-32c-17.67 0-32 14.33-32 32v144H32c-17.67 0-32 14.33-32 32v32c0 17.67 14.33 32 32 32h144v144c0 17.67 14.33 32 32 32h32c17.67 0 32-14.33 32-32V304h144c17.67 0 32-14.33 32-32v-32c0-17.67-14.33-32-32-32z"/></svg><span style="left:48px">Create Invoice</span></div>
 <div class="di" style="top:294.5px"><svg width="9.62" height="14" viewBox="0 0 352 512" fill="#28313c" style="left:24px"><path d="M242.72 256l100.07-100.07c12.28-12.28 12.28-32.19 0-44.48l-22.24-22.24c-12.28-12.28-32.19-12.28-44.48 0L176 189.28 75.93 89.21c-12.28-12.28-32.19-12.28-44.48 0L9.21 111.45c-12.28 12.28-12.28 32.19 0 44.48L109.28 256 9.21 356.07c-12.28 12.28-12.28 32.19 0 44.48l22.24 22.24c12.28 12.28 32.2 12.28 44.48 0L176 322.72l100.07 100.07c12.28 12.28 32.2 12.28 44.48 0l22.24-22.24c12.28-12.28 12.28-32.19 0-44.48L242.72 256z"/></svg><span style="left:45.5px">Cancel Estimate</span></div>
 <div class="di" style="top:330.5px"><svg width="12.25" height="14" viewBox="0 0 448 512" fill="#28313c" style="left:24px"><path d="M320 448v40c0 13.255-10.745 24-24 24H24c-13.255 0-24-10.745-24-24V120c0-13.255 10.745-24 24-24h72v296c0 30.879 25.121 56 56 56h168zm0-344V0H152c-13.255 0-24 10.745-24 24v368c0 13.255 10.745 24 24 24h272c13.255 0 24-10.745 24-24V128H344c-13.200 0-24-10.800-24-24zm120.971-31.029L375.029 7.029A24 24 0 0 0 358.059 0H352v96h96v-6.059a24 24 0 0 0-7.029-16.970z"/></svg><span style="left:48px">Create Duplicate</span></div>
</div>
<div class="abs" style="left:1676px;top:302px;width:190px;height:47px;border:4px solid #a62d42;border-radius:12px"></div>

<!-- OVERLAYS -->
<div id="ov">
 <div class="abs" style="left:0;top:905px;width:250px;height:1px;background:#2a2d40"></div>
 <svg class="abs" style="left:16.500px;top:920.500px" width="9" height="16" viewBox="0 0 10 18" fill="none" stroke="#b9bdcb" stroke-width="2" stroke-linecap="round" stroke-linejoin="round"><path d="M8 1.500L1.500 9 8 16.500"/></svg>
 <svg width="14.0" height="14" viewBox="0 0 512 512" fill="#5d6272" style="position:absolute;left:229.700px;top:921.700px"><path d="M504 256c0 136.997-111.043 248-248 248S8 392.997 8 256C8 119.083 119.043 8 256 8s248 111.083 248 248zM262.655 90c-54.497 0-89.255 22.957-116.549 63.758-3.536 5.286-2.353 12.415 2.715 16.258l34.699 26.310c5.205 3.947 12.621 3.008 16.665-2.122 17.864-22.658 30.113-35.797 57.303-35.797 20.429 0 45.698 13.148 45.698 32.958 0 14.976-12.363 22.667-32.534 33.976C247.128 238.528 216 254.941 216 296v4c0 6.627 5.373 12 12 12h56c6.627 0 12-5.373 12-12v-1.333c0-28.462 83.186-29.647 83.186-106.667 0-58.002-60.165-102-116.531-102zM256 338c-25.365 0-46 20.635-46 46 0 25.364 20.635 46 46 46s46-20.636 46-46c0-25.365-20.635-46-46-46z"/></svg>
 <div class="abs" style="left:11px;top:877px;width:60px;height:60px;border-radius:50%;background:#fff;box-shadow:0 0 3px rgba(0,0,0,.25)"><svg class="abs" style="left:0;top:0" width="60" height="60" viewBox="0 0 60 60"><polygon points="14.0,20.2 29.9,11.6 43.1,18.8 43.1,24.6 30.1,32.0 30.1,26.9 38.3,22.2 38.3,21.5 29.9,16.9 18.9,23.2 18.9,42.3 14.0,39.0" fill="#333336"/><polygon points="22.2,24.9 27.0,22.8 27.0,41.0 30.1,42.8 40.9,36.8 40.9,34.6 38.9,30.9 42.2,28.8 45.7,30.2 45.7,39.0 30.1,47.9 22.2,43.4" fill="#f4692a"/></svg></div>
 <div class="abs" style="left:77px;top:885px;width:49px;height:44.500px;border-radius:7px;background:#fff;border:1px solid #e3e3e8;font-size:15px;line-height:41px;text-align:center;color:#333">Stop</div>
 <div class="abs" style="left:136px;top:885px;width:100px;height:44.500px;border-radius:7px;background:#fff;border:1px solid #e3e3e8;font-size:15px;line-height:41px;text-align:center;color:#333">Discard</div>
 <div class="abs" style="left:246px;top:885px;width:37.600px;height:44.500px;border-radius:7px;background:#fff;border:1px solid #e4e6ee"><svg class="abs" style="left:7px;top:9.400px" width="24" height="26" viewBox="0 0 24 26" fill="none" stroke="#111" stroke-width="1.900" stroke-linecap="round" stroke-linejoin="round"><path d="M21 7.200H2.300M6.800 2.500L2.100 7.200 6.800 11.900M1.700 15.800h18.800M15.900 11.100l4.700 4.700-4.700 4.700"/></svg></div>
 <div class="abs" style="left:1887px;top:915px;width:23px;height:28px;border-radius:5px;background:#46484d;color:#fff;font-size:12px;font-weight:bold;font-style:italic;line-height:28px;text-align:center">7</div>
</div>
</body>
</html>
